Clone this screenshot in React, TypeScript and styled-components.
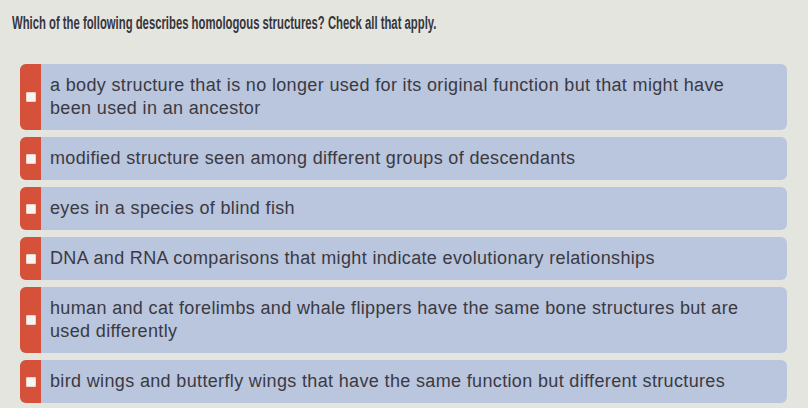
import React from "react";
import styled, { createGlobalStyle } from "styled-components";

const GlobalStyle = createGlobalStyle`
  html, body {
    margin: 0;
    padding: 0;
    background: #e5e5e0;
  }
  body {
    font-family: "Liberation Sans", Arial, sans-serif;
  }
`;

const Page = styled.div`
  width: 808px;
  height: 408px;
  box-sizing: border-box;
  padding: 12px 21px 0 20px;
  background: #e5e5e0;
  overflow: hidden;
`;

const Title = styled.h1`
  margin: 0 0 0 -8px;
  height: 52px;
  font-size: 18px;
  line-height: 22px;
  font-weight: 700;
  color: #36363c;
  white-space: nowrap;
`;

const TitleText = styled.span`
  display: inline-block;
  transform: scaleX(0.628);
  transform-origin: left center;
`;

const List = styled.div`
  display: flex;
  flex-direction: column;
  gap: 7px;
`;

const Card = styled.label`
  display: flex;
  align-items: stretch;
  background: #bac5de;
  border-radius: 6px;
  overflow: hidden;
  cursor: pointer;
`;

const Strip = styled.div`
  flex: 0 0 21px;
  background: #d5513a;
  display: flex;
  align-items: center;
  justify-content: center;
`;

const Box = styled.span`
  width: 8px;
  height: 8px;
  background: #f7f4f2;
  border: 1px solid #e9d6d0;
  border-radius: 1px;
`;

const Text = styled.div`
  padding: 10px 35px 10px 9px;
  font-size: 18px;
  letter-spacing: 0.35px;
  line-height: 23px;
  color: #3a3a42;
`;

const options = [
  "a body structure that is no longer used for its original function but that might have been used in an ancestor",
  "modified structure seen among different groups of descendants",
  "eyes in a species of blind fish",
  "DNA and RNA comparisons that might indicate evolutionary relationships",
  "human and cat forelimbs and whale flippers have the same bone structures but are used differently",
  "bird wings and butterfly wings that have the same function but different structures",
];

export default function App() {
  return (
    <>
      <GlobalStyle />
      <Page>
        <Title>
          <TitleText>
            Which of the following describes homologous structures? Check all that apply.
          </TitleText>
        </Title>
        <List>
          {options.map((o) => (
            <Card key={o}>
              <Strip>
                <Box />
              </Strip>
              <Text>{o}</Text>
            </Card>
          ))}
        </List>
      </Page>
    </>
  );
}
